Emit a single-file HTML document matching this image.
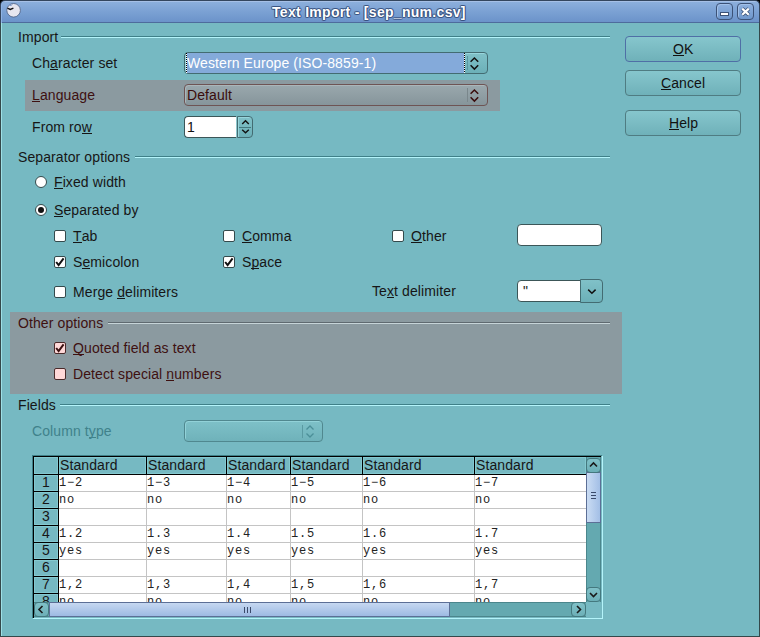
<!DOCTYPE html>
<html><head><meta charset="utf-8">
<style>
*{margin:0;padding:0;box-sizing:border-box}
html,body{width:760px;height:637px;overflow:hidden;background:#000}
body{position:relative;font-family:"Liberation Sans",sans-serif;font-size:14px;color:#161616}
.a{position:absolute}
.t{position:absolute;white-space:nowrap;line-height:16px;font-size:14px;letter-spacing:0.1px}
u{text-decoration:none;position:relative}
u:after{content:"";position:absolute;left:0;right:0;bottom:1px;height:1px;background:currentColor}
#title{position:absolute;left:0;top:0;width:760px;height:23px;border-radius:5px 5px 0 0;border:1px solid #34465e;border-bottom:0;
  background:linear-gradient(#a6c0e6 0,#a6c0e6 1px,#8cafdc 1px,#7ca2d4 10px,#6b93ca 21px,#4e6c9c 21px,#4e6c9c 22px);box-shadow:inset 1px 0 0 #90b4e4}
#frame{position:absolute;left:0;top:23px;width:760px;height:614px;background:#34484a}
#content{position:absolute;left:1px;top:23px;width:758px;height:613px;background:#76b9c2;border-left:1px solid #9ee0e6}
.ttl{position:absolute;left:272px;top:4px;font-weight:bold;font-size:14px;line-height:16px;color:#fff;letter-spacing:0.3px;
  text-shadow:1px 0 0 rgba(50,75,120,.75),-1px 0 0 rgba(50,75,120,.75),0 1px 0 rgba(50,75,120,.75),0 -1px 0 rgba(50,75,120,.75),1px 1px 0 rgba(50,75,120,.4),-1px -1px 0 rgba(50,75,120,.4),1px -1px 0 rgba(50,75,120,.4),-1px 1px 0 rgba(50,75,120,.4)}
.wbtn{position:absolute;top:3px;width:17px;height:17px;border:1px solid #3c5277;border-radius:4px;
  background:linear-gradient(#8db0de,#6f97cc);box-shadow:inset 1px 1px 0 #a2c0e8}
.fl{position:absolute;height:2px;border-top:1px solid #3f8088;border-bottom:1px solid #b4f4fa}
.fl2{position:absolute;height:2px;border-top:1px solid #5f6a70;border-bottom:1px solid #c6d4d8}
.btn{position:absolute;left:625px;width:116px;height:26px;border:1px solid #4f7c82;border-radius:4px;
  background:linear-gradient(#86c6cd,#6fb1b9);font-size:14px;color:#111}
.cb{position:absolute;width:12px;height:12px;border:1px solid #344a4c;border-radius:2px;background:#fff}
.rb{position:absolute;width:12px;height:12px;border:1px solid #344a4c;border-radius:50%;background:#fff}
.gray{position:absolute;background:#8b9aa0}
.combo{position:absolute;border:1px solid #436c72;border-radius:4px;background:linear-gradient(#80c1c8,#6cb0b8)}
.edit{position:absolute;border:1px solid #3c5658;border-radius:4px;background:#fff}
.mono{font-family:"Liberation Mono",monospace;font-size:12px;letter-spacing:0.8px;color:#222}
.sb{position:absolute;width:15px;height:15px;border:1px solid #44787e;border-radius:4px;background:linear-gradient(#80c1c8,#6cafb7)}
</style></head><body>
<div id="title"></div>
<div class="ttl">Text Import - [sep_num.csv]</div>
<svg class="a" style="left:5px;top:2px" width="18" height="18" viewBox="0 0 18 18">
    <circle cx="8.6" cy="8.3" r="6.8" fill="#e6e6ef" stroke="#4a5d80" stroke-width="0.8"/>
    <path d="M2.4 6.2 L5.3 7.4 L8.4 6.2" fill="none" stroke="#111" stroke-width="1.4"/><path d="M4.6 7.4 L5.3 8.2 L6 7.4Z" fill="#111"/>
    <path d="M4.6 1.8 L5.6 4 L7.2 2.4" fill="none" stroke="#7d9acb" stroke-width="1"/>
  </svg>
<div class="wbtn" style="left:716px"><div class="a" style="left:3px;top:8px;width:9px;height:4px;background:#fff;border:1px solid #3c5277"></div></div>
<div class="wbtn" style="left:737px">
    <svg class="a" style="left:0;top:0" width="15" height="15" viewBox="0 0 15 15"><path d="M4.2 4.6 L10.8 10.8 M10.8 4.6 L4.2 10.8" stroke="#3c5277" stroke-width="3.8"/><path d="M4.2 4.6 L10.8 10.8 M10.8 4.6 L4.2 10.8" stroke="#fff" stroke-width="2.2"/></svg>
  </div>
<div id="frame"></div><div id="content"></div>
<div class="t" style="left:18px;top:29px;">Import</div>
<div class="fl" style="left:61px;top:36px;width:549px"></div>
<div class="t" style="left:32px;top:55px;">Ch<u>a</u>racter set</div>
<div class="combo" style="left:184px;top:52px;width:304px;height:22px;box-shadow:inset 1px 1px 0 #98d6dc">
 <div class="a" style="left:1px;top:0;width:279px;height:20px;background:#84aada"></div>
 <div class="a" style="left:1px;top:0;width:1px;height:20px;background:repeating-linear-gradient(#000 0 1px,#fff 1px 2px)"></div>
 <div class="a" style="left:279px;top:0;width:1px;height:20px;background:repeating-linear-gradient(#000 0 1px,#fff 1px 2px)"></div>
 <div class="a" style="left:282px;top:3px;width:1px;height:14px;background:#5a98a0"></div>
 <svg class="a" style="left:284px;top:2px" width="16" height="17" viewBox="0 0 16 17"><path d="M1.6 6.8 L5.4 3 L9.2 6.8 M1.6 10.3 L5.4 14.1 L9.2 10.3" fill="none" stroke="#111" stroke-width="1.5"/></svg>
 <div class="t" style="left:2px;top:2px;color:#fff">Western Europe (ISO-8859-1)</div>
</div>
<div class="gray" style="left:25px;top:80px;width:475px;height:31px"></div>
<div class="t" style="left:32px;top:87px;color:#3e1010"><u>L</u>anguage</div>
<div class="combo" style="left:184px;top:84px;width:304px;height:22px;border-color:#6e5454;background:linear-gradient(#9aa8ad,#86959b);box-shadow:inset 1px 1px 0 #aab6ba">
 <div class="a" style="left:282px;top:3px;width:1px;height:14px;background:#7a878c"></div>
 <svg class="a" style="left:284px;top:2px" width="16" height="17" viewBox="0 0 16 17"><path d="M1.6 6.8 L5.4 3 L9.2 6.8 M1.6 10.3 L5.4 14.1 L9.2 10.3" fill="none" stroke="#3a0c0c" stroke-width="1.5"/></svg>
 <div class="t" style="left:2px;top:2px;color:#3a0c0c">Default</div>
</div>
<div class="t" style="left:32px;top:119px;">From ro<u>w</u></div>
<div class="edit" style="left:184px;top:116px;width:53px;height:22px;border-radius:4px 0 0 4px;border-right-color:#8cc6cc"><div class="t" style="left:2px;top:2px;color:#111">1</div></div>
<div class="combo" style="left:237px;top:116px;width:16px;height:22px;border-radius:0 4px 4px 0;box-shadow:inset 1px 1px 0 #98d6dc">
 <div class="a" style="left:1px;top:10px;width:12px;height:1px;background:#44787e"></div>
 <svg class="a" style="left:0;top:0" width="14" height="20" viewBox="0 0 14 20"><path d="M4.2 7 L7.5 3.7 L10.8 7 M4.2 12.7 L7.5 15.8 L10.8 12.7" fill="none" stroke="#111" stroke-width="1.4"/></svg>
</div>
<div class="t" style="left:18px;top:149px;">Separator options</div>
<div class="fl" style="left:135px;top:156px;width:475px"></div>
<div class="rb" style="left:35px;top:176px"></div>
<div class="t" style="left:54px;top:174px;"><u>F</u>ixed width</div>
<div class="rb" style="left:35px;top:204px"><div class="a" style="left:2px;top:2px;width:6px;height:6px;border-radius:50%;background:#111"></div></div>
<div class="t" style="left:54px;top:202px;"><u>S</u>eparated by</div>
<div class="cb" style="left:54px;top:230px;"></div>
<div class="t" style="left:73px;top:228px;"><u>T</u>ab</div>
<div class="cb" style="left:223px;top:230px;"></div>
<div class="t" style="left:242px;top:228px;"><u>C</u>omma</div>
<div class="cb" style="left:392px;top:230px;"></div>
<div class="t" style="left:411px;top:228px;"><u>O</u>ther</div>
<div class="edit" style="left:517px;top:224px;width:85px;height:22px"></div>
<div class="cb" style="left:54px;top:256px;"><svg class="a" style="left:0;top:0" width="10" height="10" viewBox="0 0 10 10"><path d="M1.2 5 L3.6 8 L8.6 1.4" fill="none" stroke="#111" stroke-width="2"/></svg></div>
<div class="t" style="left:73px;top:254px;">S<u>e</u>micolon</div>
<div class="cb" style="left:223px;top:256px;"><svg class="a" style="left:0;top:0" width="10" height="10" viewBox="0 0 10 10"><path d="M1.2 5 L3.6 8 L8.6 1.4" fill="none" stroke="#111" stroke-width="2"/></svg></div>
<div class="t" style="left:242px;top:254px;">S<u>p</u>ace</div>
<div class="cb" style="left:54px;top:286px;"></div>
<div class="t" style="left:73px;top:284px;">Merge <u>d</u>elimiters</div>
<div class="t" style="left:372px;top:283px;">Te<u>x</u>t delimiter</div>
<div class="edit" style="left:517px;top:280px;width:70px;height:22px;border-radius:4px 0 0 4px"><div class="t" style="left:5px;top:2px;color:#222">"</div></div>
<div class="combo" style="left:580px;top:279px;width:23px;height:24px;border-radius:0 4px 4px 0">
 <svg class="a" style="left:0;top:0" width="21" height="22" viewBox="0 0 21 22"><path d="M7.2 9.6 L10.9 13.2 L14.6 9.6" fill="none" stroke="#111" stroke-width="1.5"/></svg>
</div>
<div class="gray" style="left:10px;top:312px;width:612px;height:82px"></div>
<div class="t" style="left:18px;top:315px;color:#3e1010">Other options</div>
<div class="fl2" style="left:108px;top:322px;width:502px"></div>
<div class="cb" style="left:54px;top:342px;background:#ffd8d8;border-color:#4a2a2a"><svg class="a" style="left:0;top:0" width="10" height="10" viewBox="0 0 10 10"><path d="M1.2 5 L3.6 8 L8.6 1.4" fill="none" stroke="#3a1010" stroke-width="2"/></svg></div>
<div class="t" style="left:73px;top:340px;color:#3e1010"><u>Q</u>uoted field as text</div>
<div class="cb" style="left:54px;top:368px;background:#ffd8d8;border-color:#4a2a2a"></div>
<div class="t" style="left:73px;top:366px;color:#3e1010">Detect special <u>n</u>umbers</div>
<div class="t" style="left:18px;top:397px;">Fields</div>
<div class="fl" style="left:60px;top:404px;width:550px"></div>
<div class="t" style="left:32px;top:423px;color:#40828b">Column t<u>y</u>pe</div>
<div class="combo" style="left:184px;top:420px;width:139px;height:22px;border-color:#50888f;background:linear-gradient(#7ec1c8,#6fb2ba);box-shadow:inset 1px 1px 0 #92d2d8">
 <div class="a" style="left:117px;top:4px;width:1px;height:13px;background:#5a9aa2"></div>
 <svg class="a" style="left:118px;top:2px" width="16" height="17" viewBox="0 0 16 17"><path d="M3.5 6.5 L7 3 L10.5 6.5 M3.5 10.5 L7 14 L10.5 10.5" fill="none" stroke="#4b8f98" stroke-width="1.3"/></svg>
</div>
<div class="btn" style="top:36px;border-color:#4f6fa6"><div class="t" style="left:47px;top:4px"><u>O</u>K</div></div>
<div class="btn" style="top:70px;"><div class="t" style="left:35px;top:4px"><u>C</u>ancel</div></div>
<div class="btn" style="top:110px;"><div class="t" style="left:43px;top:4px"><u>H</u>elp</div></div>
<div class="a" style="left:32px;top:455px;width:571px;height:164px;border-top:1px solid #3f8088;border-left:1px solid #3f8088;border-right:1px solid #b4f4fa;border-bottom:1px solid #b4f4fa"></div>
<div class="a" style="left:33px;top:456px;width:568px;height:162px;background:#fff;border-top:1px solid #000;border-left:1px solid #000;overflow:hidden">
<div class="a" style="left:0;top:0;width:25px;height:161px;background:#000"></div>
<div class="a" style="left:0;top:0;width:567px;height:18px;background:#000"></div>
<div class="a" style="left:0;top:0;width:24px;height:17px;background:#76b9c2;box-shadow:inset 0 0 0 1px #84c9d0"></div>
<div class="a" style="left:25px;top:0;width:87px;height:17px;background:#76b9c2;box-shadow:inset 0 0 0 1px #84c9d0"></div>
<div class="a" style="left:113px;top:0;width:79px;height:17px;background:#76b9c2;box-shadow:inset 0 0 0 1px #84c9d0"></div>
<div class="a" style="left:193px;top:0;width:63px;height:17px;background:#76b9c2;box-shadow:inset 0 0 0 1px #84c9d0"></div>
<div class="a" style="left:257px;top:0;width:71px;height:17px;background:#76b9c2;box-shadow:inset 0 0 0 1px #84c9d0"></div>
<div class="a" style="left:329px;top:0;width:111px;height:17px;background:#76b9c2;box-shadow:inset 0 0 0 1px #84c9d0"></div>
<div class="a" style="left:441px;top:0;width:111px;height:17px;background:#76b9c2;box-shadow:inset 0 0 0 1px #84c9d0"></div>
<div class="a" style="left:0;top:18px;width:24px;height:16px;background:#76b9c2;box-shadow:inset 0 0 0 1px #84c9d0"></div>
<div class="a" style="left:0;top:35px;width:24px;height:16px;background:#76b9c2;box-shadow:inset 0 0 0 1px #84c9d0"></div>
<div class="a" style="left:0;top:52px;width:24px;height:16px;background:#76b9c2;box-shadow:inset 0 0 0 1px #84c9d0"></div>
<div class="a" style="left:0;top:69px;width:24px;height:16px;background:#76b9c2;box-shadow:inset 0 0 0 1px #84c9d0"></div>
<div class="a" style="left:0;top:86px;width:24px;height:16px;background:#76b9c2;box-shadow:inset 0 0 0 1px #84c9d0"></div>
<div class="a" style="left:0;top:103px;width:24px;height:16px;background:#76b9c2;box-shadow:inset 0 0 0 1px #84c9d0"></div>
<div class="a" style="left:0;top:120px;width:24px;height:16px;background:#76b9c2;box-shadow:inset 0 0 0 1px #84c9d0"></div>
<div class="a" style="left:0;top:137px;width:24px;height:16px;background:#76b9c2;box-shadow:inset 0 0 0 1px #84c9d0"></div>
<div class="a" style="left:25px;top:34px;width:545px;height:1px;background:#c4c4c4"></div>
<div class="a" style="left:25px;top:51px;width:545px;height:1px;background:#c4c4c4"></div>
<div class="a" style="left:25px;top:68px;width:545px;height:1px;background:#c4c4c4"></div>
<div class="a" style="left:25px;top:85px;width:545px;height:1px;background:#c4c4c4"></div>
<div class="a" style="left:25px;top:102px;width:545px;height:1px;background:#c4c4c4"></div>
<div class="a" style="left:25px;top:119px;width:545px;height:1px;background:#c4c4c4"></div>
<div class="a" style="left:25px;top:136px;width:545px;height:1px;background:#c4c4c4"></div>
<div class="a" style="left:25px;top:153px;width:545px;height:1px;background:#c4c4c4"></div>
<div class="a" style="left:112px;top:18px;width:1px;height:143px;background:#c4c4c4"></div>
<div class="a" style="left:192px;top:18px;width:1px;height:143px;background:#c4c4c4"></div>
<div class="a" style="left:256px;top:18px;width:1px;height:143px;background:#c4c4c4"></div>
<div class="a" style="left:328px;top:18px;width:1px;height:143px;background:#c4c4c4"></div>
<div class="a" style="left:440px;top:18px;width:1px;height:143px;background:#c4c4c4"></div>
<div class="t" style="left:26px;top:0px">Standard</div>
<div class="t" style="left:114px;top:0px">Standard</div>
<div class="t" style="left:194px;top:0px">Standard</div>
<div class="t" style="left:258px;top:0px">Standard</div>
<div class="t" style="left:330px;top:0px">Standard</div>
<div class="t" style="left:442px;top:0px">Standard</div>
<div class="t" style="left:0;width:24px;text-align:center;top:17px">1</div>
<div class="t" style="left:0;width:24px;text-align:center;top:34px">2</div>
<div class="t" style="left:0;width:24px;text-align:center;top:51px">3</div>
<div class="t" style="left:0;width:24px;text-align:center;top:68px">4</div>
<div class="t" style="left:0;width:24px;text-align:center;top:85px">5</div>
<div class="t" style="left:0;width:24px;text-align:center;top:102px">6</div>
<div class="t" style="left:0;width:24px;text-align:center;top:119px">7</div>
<div class="t" style="left:0;width:24px;text-align:center;top:136px">8</div>
<div class="t mono" style="left:25px;top:18px">1&#8722;2</div>
<div class="t mono" style="left:113px;top:18px">1&#8722;3</div>
<div class="t mono" style="left:193px;top:18px">1&#8722;4</div>
<div class="t mono" style="left:257px;top:18px">1&#8722;5</div>
<div class="t mono" style="left:329px;top:18px">1&#8722;6</div>
<div class="t mono" style="left:441px;top:18px">1&#8722;7</div>
<div class="t mono" style="left:25px;top:35px">no</div>
<div class="t mono" style="left:113px;top:35px">no</div>
<div class="t mono" style="left:193px;top:35px">no</div>
<div class="t mono" style="left:257px;top:35px">no</div>
<div class="t mono" style="left:329px;top:35px">no</div>
<div class="t mono" style="left:441px;top:35px">no</div>
<div class="t mono" style="left:25px;top:69px">1.2</div>
<div class="t mono" style="left:113px;top:69px">1.3</div>
<div class="t mono" style="left:193px;top:69px">1.4</div>
<div class="t mono" style="left:257px;top:69px">1.5</div>
<div class="t mono" style="left:329px;top:69px">1.6</div>
<div class="t mono" style="left:441px;top:69px">1.7</div>
<div class="t mono" style="left:25px;top:86px">yes</div>
<div class="t mono" style="left:113px;top:86px">yes</div>
<div class="t mono" style="left:193px;top:86px">yes</div>
<div class="t mono" style="left:257px;top:86px">yes</div>
<div class="t mono" style="left:329px;top:86px">yes</div>
<div class="t mono" style="left:441px;top:86px">yes</div>
<div class="t mono" style="left:25px;top:120px">1,2</div>
<div class="t mono" style="left:113px;top:120px">1,3</div>
<div class="t mono" style="left:193px;top:120px">1,4</div>
<div class="t mono" style="left:257px;top:120px">1,5</div>
<div class="t mono" style="left:329px;top:120px">1,6</div>
<div class="t mono" style="left:441px;top:120px">1,7</div>
<div class="t mono" style="left:25px;top:137px">no</div>
<div class="t mono" style="left:113px;top:137px">no</div>
<div class="t mono" style="left:193px;top:137px">no</div>
<div class="t mono" style="left:257px;top:137px">no</div>
<div class="t mono" style="left:329px;top:137px">no</div>
<div class="t mono" style="left:441px;top:137px">no</div>
<div class="a" style="left:552px;top:0px;width:15px;height:145px;background:#64a9b0;border-left:1px solid #4b868c;border-right:1px solid #4b868c"></div>
<div class="a" style="left:552px;top:15px;width:15px;height:51px;border:1px solid #5a72a0;background:linear-gradient(90deg,#cadcf3,#a3bfe6);border-color:#5c6f96"></div>
<div class="a" style="left:557px;top:35px;width:5px;height:1px;background:#3a4a6a"></div>
<div class="a" style="left:557px;top:38px;width:5px;height:1px;background:#3a4a6a"></div>
<div class="a" style="left:557px;top:41px;width:5px;height:1px;background:#3a4a6a"></div>
<div class="sb" style="left:552px;top:1px"><svg class="a" style="left:0;top:0" width="13" height="13" viewBox="0 0 13 13"><path d="M3 7.5 L6.5 4 L10 7.5" fill="none" stroke="#1a1a1a" stroke-width="1.6"/></svg></div>
<div class="sb" style="left:552px;top:130px"><svg class="a" style="left:0;top:0" width="13" height="13" viewBox="0 0 13 13"><path d="M3 5 L6.5 8.5 L10 5" fill="none" stroke="#1a1a1a" stroke-width="1.6"/></svg></div>
<div class="a" style="left:0;top:145px;width:567px;height:16px;background:#76b9c2"></div>
<div class="a" style="left:0;top:145px;width:552px;height:15px;background:#64a9b0;border-top:1px solid #4b868c;border-bottom:1px solid #4b868c"></div>
<div class="a" style="left:15px;top:145px;width:401px;height:15px;border:1px solid #5c6f96;background:linear-gradient(#c6d8f1,#9dbae3)"></div>
<div class="a" style="left:210px;top:150px;width:1px;height:6px;background:#3a4a6a"></div>
<div class="a" style="left:213px;top:150px;width:1px;height:6px;background:#3a4a6a"></div>
<div class="a" style="left:216px;top:150px;width:1px;height:6px;background:#3a4a6a"></div>
<div class="sb" style="left:0px;top:145px"><svg class="a" style="left:0;top:0" width="13" height="13" viewBox="0 0 13 13"><path d="M7.5 3 L4 6.5 L7.5 10" fill="none" stroke="#1a1a1a" stroke-width="1.6"/></svg></div>
<div class="sb" style="left:537px;top:145px"><svg class="a" style="left:0;top:0" width="13" height="13" viewBox="0 0 13 13"><path d="M5 3 L8.5 6.5 L5 10" fill="none" stroke="#1a1a1a" stroke-width="1.6"/></svg></div>
<div class="a" style="left:552px;top:145px;width:15px;height:16px;background:#76b9c2"></div>
</div>
</body></html>
